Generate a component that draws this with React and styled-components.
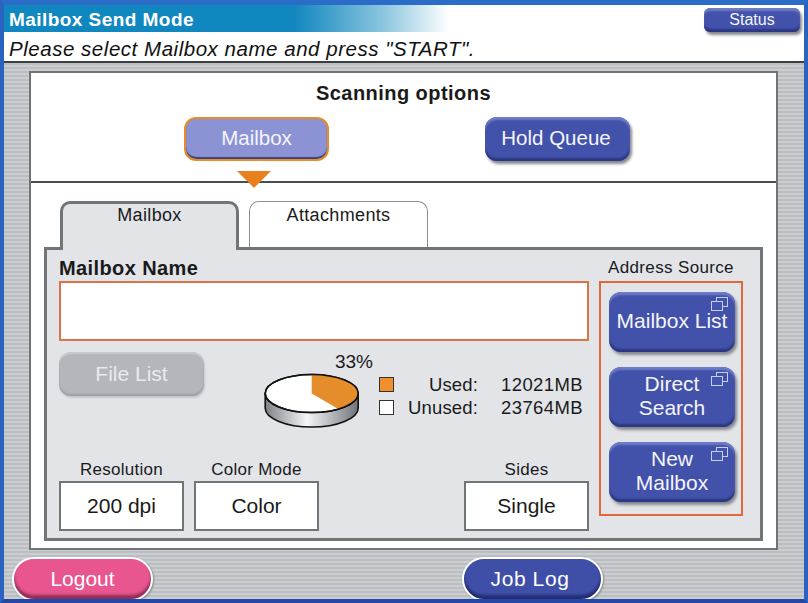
import React from 'react'
import styled, { createGlobalStyle } from 'styled-components'

const Global = createGlobalStyle`
  html, body {
    margin: 0;
    padding: 0;
    background: #fff;
  }
  * {
    box-sizing: border-box;
  }
`

const stripes = `repeating-linear-gradient(180deg, #cbcdd0 0, #cbcdd0 2px, #bcbfc2 2px, #bcbfc2 4px)`

const Frame = styled.div`
  position: relative;
  width: 808px;
  height: 603px;
  overflow: hidden;
  display: flex;
  flex-direction: column;
  border-style: solid;
  border-color: #2a6cc8 #2a62c0 #2348a8 #2a62c0;
  border-width: 5px 4px 4px 4px;
  background: ${stripes};
  font-family: "Liberation Sans", Arial, sans-serif;
  color: #1a1a1a;
`

const WindowControls = styled.div`
  position: absolute;
  top: -5px;
  right: 3px;
  display: flex;
  gap: 3px;
`

const WindowControl = styled.span`
  width: 20px;
  height: 3px;
  border: 1px solid #dfe6f5;
  border-top: 0;
  border-radius: 0 0 4px 4px;
  background: ${p => (p.$close ? '#d9674a' : '#3a74cc')};
`

const TitleBar = styled.div`
  height: 29px;
  display: flex;
  align-items: center;
  justify-content: space-between;
  padding: 3px 4px 0 5px;
  background: linear-gradient(90deg, #1187bf 0, #1187bf 290px, #8cc6df 380px, #ffffff 445px);
`

const Title = styled.h1`
  margin: 0;
  font-size: 19px;
  font-weight: bold;
  letter-spacing: 0.45px;
  color: #fff;
`

const Message = styled.div`
  height: 31px;
  padding: 3px 0 0 5px;
  background: #fff;
  border-bottom: 2px solid #3c3f42;
  font-size: 20.5px;
  font-style: italic;
  line-height: 27px;
  letter-spacing: 0.53px;
  color: #111;
`

const Main = styled.main`
  flex: 1;
  padding: 8px 26px 0 25px;
  display: flex;
  flex-direction: column;
`

const Sheet = styled.section`
  height: 479px;
  border: 2px solid #6f7478;
  background: #fff;
  display: flex;
  flex-direction: column;
`

const Options = styled.div`
  position: relative;
  height: 110px;
  border-bottom: 2px solid #4a4d50;
  flex-shrink: 0;
`

const OptionsTitle = styled.h2`
  margin: 0;
  padding-top: 8px;
  height: 44px;
  text-align: center;
  font-size: 20px;
  line-height: 24px;
  font-weight: bold;
  letter-spacing: 0.45px;
`

const OptionRow = styled.div`
  display: flex;
  gap: 156px;
  padding-left: 153px;
`

const Button = styled.button`
  position: relative;
  display: flex;
  align-items: center;
  justify-content: center;
  width: ${p => p.$w}px;
  height: ${p => p.$h}px;
  padding: 0 ${p => p.$shift || 0}px 2px 0;
  border: 0;
  border-radius: 12px;
  background: #4252aa;
  box-shadow: inset 0 3px 2px #6f7cc6, inset 0 -3px 2px #2c3782, 2px 3px 3px #85888d;
  color: #f4f5fb;
  font-family: inherit;
  font-size: ${p => p.$size || 20.5}px;
  line-height: 24px;
`

const StatusButton = styled(Button)`
  padding: 0;
  border-radius: 6px;
`

const SelectedButton = styled(Button)`
  background: #8c93d4;
  border: 2px solid #e88c2a;
  box-shadow: inset 0 -2px 1px #3c4378;
`

const DisabledButton = styled(Button)`
  padding: 0;
  background: #b4b6bb;
  box-shadow: inset 0 2px 1px #c8cacd, inset 0 -2px 2px #9c9ea3, 1px 2px 2px #c4c6ca;
  color: #e9eaec;
`

const Marker = styled.span`
  position: absolute;
  left: 206px;
  top: 98px;
  width: 0;
  height: 0;
  border-style: solid;
  border-width: 17px 17px 0 17px;
  border-color: #e8801f transparent transparent transparent;
`

const TabRow = styled.div`
  display: flex;
  gap: 10px;
  margin-top: 18px;
  padding-left: 29px;
  position: relative;
  z-index: 1;
`

const Tab = styled.div`
  width: 179px;
  height: ${p => (p.$active ? 49 : 46)}px;
  margin-bottom: ${p => (p.$active ? -3 : 0)}px;
  padding-top: ${p => (p.$active ? 0 : 2)}px;
  border: ${p => (p.$active ? '3px solid #707578' : '1px solid #8a8e92')};
  border-bottom: 0;
  border-radius: 10px 10px 0 0;
  background: ${p => (p.$active ? '#e2e4e8' : '#fff')};
  text-align: center;
  font-size: 18px;
  letter-spacing: 0.35px;
  line-height: 22px;
`

const Pane = styled.div`
  margin: 0 13px 0 13px;
  height: 294px;
  border: 3px solid #707578;
  background: #e2e4e8;
  display: flex;
  gap: 10px;
  padding: 0 17px 7px 12px;
`

const LeftColumn = styled.div`
  width: 530px;
  display: flex;
  flex-direction: column;
`

const FieldName = styled.div`
  height: 31px;
  font-size: 20px;
  font-weight: bold;
  letter-spacing: 0.4px;
  line-height: 36px;
`

const NameInput = styled.div`
  height: 60px;
  border: 2px solid #d9734a;
  background: #fff;
`

const UsageRow = styled.div`
  display: flex;
  margin-top: 11px;
`

const Usage = styled.div`
  display: flex;
  margin-left: 60px;
`

const PieBlock = styled.div`
  width: 115px;
  display: flex;
  flex-direction: column;
`

const Percent = styled.div`
  height: 21px;
  align-self: flex-end;
  margin-right: 6px;
  font-size: 19px;
  line-height: 20px;
`

const Legend = styled.div`
  display: grid;
  grid-template-columns: 15px 84px 105px;
  grid-auto-rows: 23px;
  align-items: center;
  margin-top: 21px;
  font-size: 18.5px;
  letter-spacing: 0.15px;
`

const Swatch = styled.span`
  width: 15px;
  height: 15px;
  border: 1px solid #333;
  background: ${p => p.$color};
`

const LegendLabel = styled.span`
  text-align: right;
`

const LegendValue = styled.span`
  text-align: right;
  letter-spacing: 0.4px;
`

const Settings = styled.div`
  margin-top: auto;
  display: flex;
  gap: 10px;
`

const Setting = styled.div`
  width: 125px;
  margin-left: ${p => p.$gap || 0}px;
  text-align: center;
`

const SettingLabel = styled.div`
  height: 20px;
  font-size: 17px;
  letter-spacing: 0.25px;
  line-height: 18px;
  white-space: nowrap;
`

const SettingValue = styled.div`
  height: 50px;
  border: 2px solid #707578;
  background: #fff;
  font-size: 21px;
  line-height: 46px;
`

const RightColumn = styled.div`
  width: 145px;
  display: flex;
  flex-direction: column;
`

const SourceLabel = styled.div`
  height: 31px;
  font-size: 17px;
  letter-spacing: 0.35px;
  line-height: 36px;
  text-align: center;
  white-space: nowrap;
`

const SourceBox = styled.div`
  height: 235px;
  border: 2px solid #e0683a;
  display: flex;
  flex-direction: column;
  gap: 15px;
  padding: 9px 0 0 8px;
`

const PopupIcon = styled.svg`
  position: absolute;
  top: 5px;
  right: 7px;
  width: 17px;
  height: 14px;
`

const Footer = styled.footer`
  flex: 1;
  display: flex;
  padding: 7px 0 0 8px;
  gap: 309px;
  margin-left: -25px;
`

const PillButton = styled.button`
  width: 141px;
  height: 44px;
  padding: 0 ${p => p.$shift || 0}px 1px 0;
  border: 2px solid #fff;
  border-radius: 22px;
  background: ${p => p.$color};
  box-shadow: inset 0 -4px 3px ${p => p.$edge}, 1px 1px 2px #888;
  color: #fff;
  font-family: inherit;
  font-size: 21px;
  letter-spacing: ${p => p.$spacing || 0}px;
`

const Popup = () => (
  <PopupIcon viewBox="0 0 17 14" fill="none" stroke="#c5d0ee" strokeWidth="1">
    <rect x="5.5" y="0.5" width="11" height="9" />
    <rect x="0.5" y="4.5" width="11" height="9" fill="#4656ae" />
  </PopupIcon>
)

const Pie = () => (
  <svg width="96" height="56" viewBox="0 0 96 56">
    <defs>
      <linearGradient id="side" x1="0" x2="1" y1="0" y2="0">
        <stop offset="0" stopColor="#7d8288" />
        <stop offset="0.45" stopColor="#f4f5f7" />
        <stop offset="1" stopColor="#70757b" />
      </linearGradient>
    </defs>
    <path d="M1.2 20.5V35A46.5 19 0 0 0 94.2 35V20.5Z" fill="url(#side)" stroke="#111" strokeWidth="1.6" />
    <ellipse cx="47.7" cy="20.5" rx="46.5" ry="19" fill="#fff" stroke="#111" strokeWidth="1.6" />
    <path d="M47.7 20.5V1.5A46.5 19 0 0 1 74.3 36.1Z" fill="#e58d2b" />
    <ellipse cx="47.7" cy="20.5" rx="46.5" ry="19" fill="none" stroke="#111" strokeWidth="1.6" />
  </svg>
)

const sources = [
  ['Mailbox List'],
  ['Direct', 'Search'],
  ['New', 'Mailbox'],
]

export default function App() {
  return (
    <>
      <Global />
      <Frame>
        <WindowControls>
          <WindowControl />
          <WindowControl />
          <WindowControl $close />
        </WindowControls>
        <TitleBar>
          <Title>Mailbox Send Mode</Title>
          <StatusButton $w={96} $h={24} $size={16}>Status</StatusButton>
        </TitleBar>
        <Message>Please select Mailbox name and press "START".</Message>
        <Main>
          <Sheet>
            <Options>
              <OptionsTitle>Scanning options</OptionsTitle>
              <OptionRow>
                <SelectedButton $w={145} $h={44}>Mailbox</SelectedButton>
                <Button $w={145} $h={44} $shift={3}>Hold Queue</Button>
              </OptionRow>
              <Marker />
            </Options>
            <TabRow>
              <Tab $active>Mailbox</Tab>
              <Tab>Attachments</Tab>
            </TabRow>
            <Pane>
              <LeftColumn>
                <FieldName>Mailbox Name</FieldName>
                <NameInput />
                <UsageRow>
                  <DisabledButton $w={145} $h={44} $size={21}>File List</DisabledButton>
                  <Usage>
                    <PieBlock>
                      <Percent>33%</Percent>
                      <Pie />
                    </PieBlock>
                    <Legend>
                      <Swatch $color="#f0912e" />
                      <LegendLabel>Used:</LegendLabel>
                      <LegendValue>12021MB</LegendValue>
                      <Swatch $color="#fff" />
                      <LegendLabel>Unused:</LegendLabel>
                      <LegendValue>23764MB</LegendValue>
                    </Legend>
                  </Usage>
                </UsageRow>
                <Settings>
                  <Setting>
                    <SettingLabel>Resolution</SettingLabel>
                    <SettingValue>200 dpi</SettingValue>
                  </Setting>
                  <Setting>
                    <SettingLabel>Color Mode</SettingLabel>
                    <SettingValue>Color</SettingValue>
                  </Setting>
                  <Setting $gap={135}>
                    <SettingLabel>Sides</SettingLabel>
                    <SettingValue>Single</SettingValue>
                  </Setting>
                </Settings>
              </LeftColumn>
              <RightColumn>
                <SourceLabel>Address Source</SourceLabel>
                <SourceBox>
                  {sources.map(lines => (
                    <Button key={lines[0]} $w={126} $h={60} $size={21}>
                      <span>
                        {lines.map(line => <div key={line}>{line}</div>)}
                      </span>
                      <Popup />
                    </Button>
                  ))}
                </SourceBox>
              </RightColumn>
            </Pane>
          </Sheet>
          <Footer>
            <PillButton $color="#e8558f" $edge="#8f2c58">Logout</PillButton>
            <PillButton $color="#3f4fa8" $edge="#232c70" $shift={5} $spacing={0.6}>Job Log</PillButton>
          </Footer>
        </Main>
      </Frame>
    </>
  )
}
